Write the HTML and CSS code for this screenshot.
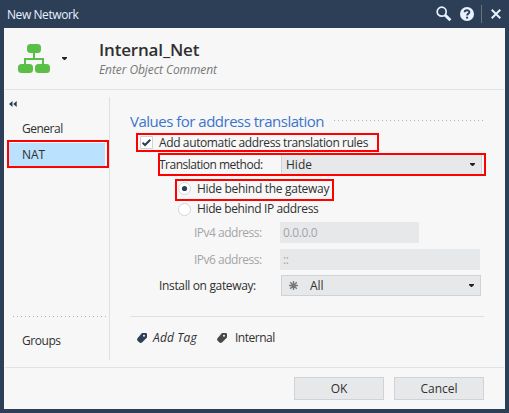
FILE: index.html
```html
<!DOCTYPE html>
<html lang="en">
<head>
<meta charset="utf-8">
<title>New Network</title>
<link rel="stylesheet" href="styles.css">
</head>
<body>
<div class="window">
  <header class="titlebar">
    <span class="title">New Network</span>
    <svg class="ic-search" width="16" height="16" viewBox="0 0 16 16"><circle cx="5.7" cy="5.7" r="4.5" fill="none" stroke="#e8f1ff" stroke-width="1.7"/><path d="M9 9L14.4 14.3" stroke="#e8f1ff" stroke-width="3"/></svg>
    <svg class="ic-help" width="14" height="14" viewBox="0 0 14 14"><circle cx="7" cy="7" r="7" fill="#e8f1ff"/><path d="M4.6 5.2C4.7 2.6 9.4 2.6 9.4 5.1C9.4 6.7 7.1 6.6 7.1 8.5" fill="none" stroke="#2d3f57" stroke-width="1.9"/><path d="M6.1 9.7h2v1.9h-2z" fill="#2d3f57"/></svg>
    <span class="sep"></span>
    <svg class="ic-close" width="10" height="10" viewBox="0 0 10 10"><path d="M.7.7L9.3 9.3M9.3.7L.7 9.3" stroke="#e8f1ff" stroke-width="2"/></svg>
  </header>
  <div class="panel">
    <section class="object">
      <svg class="ic-net" width="32" height="29" viewBox="0 0 32 29" fill="#5abf46"><rect x="9" y="0" width="14" height="9" rx="3.5"/><path d="M15 8h2v6h9v6h-2v-4H8v4H6v-6h9z"/><rect x="0" y="20" width="15" height="9" rx="3.5"/><rect x="17" y="20" width="15" height="9" rx="3.5"/></svg>
      <svg class="arrow" width="5" height="3" viewBox="0 0 5 3"><path d="M0 0h5v1L3 3H2L0 1z" fill="#222"/></svg>
      <div class="names">
        <h1>Internal_Net</h1>
        <p>Enter Object Comment</p>
      </div>
    </section>
    <div class="main">
      <nav class="side">
        <svg class="collapse" width="8" height="6" viewBox="0 0 8 6"><path d="M3.5 0v6L0 3zM7.7 0v6L4.2 3z" fill="#2d3f57"/></svg>
        <a class="item general">General</a>
        <a class="item nat mark">NAT</a>
        <span class="dots"></span>
        <a class="item groups">Groups</a>
      </nav>
      <div class="content">
        <div class="heading"><h2>Values for address translation</h2><span class="dots"></span></div>
        <div class="row check mark">
          <svg width="13" height="13" viewBox="0 0 13 13"><path d="M.5.5h12v12H.5z" fill="#fff" stroke="#cfd2d6"/><path d="M2.6 6.7L5 9L10.3 3.7" fill="none" stroke="#2d3f57" stroke-width="2"/></svg>
          <span class="t-check">Add automatic address translation rules</span>
        </div>
        <div class="row method mark">
          <span class="t-method">Translation method:</span>
          <div class="select"><span class="t-hide">Hide</span><svg class="arrow" width="5" height="3" viewBox="0 0 5 3"><path d="M0 0h5v1L3 3H2L0 1z" fill="#222"/></svg></div>
        </div>
        <div class="row radio first mark">
          <svg width="13" height="13" viewBox="0 0 13 13"><circle cx="6.5" cy="6.5" r="6" fill="#fff" stroke="#d3d6da"/><circle cx="6.5" cy="6.5" r="2.6" fill="#2d3f57"/></svg>
          <span class="t-gw">Hide behind the gateway</span>
        </div>
        <div class="row radio second">
          <svg width="13" height="13" viewBox="0 0 13 13"><circle cx="6.5" cy="6.5" r="6" fill="#fff" stroke="#d3d6da"/></svg>
          <span class="t-ip">Hide behind IP address</span>
        </div>
        <div class="row field"><label>IPv4 address:</label><div class="input short">0.0.0.0</div></div>
        <div class="row field"><label>IPv6 address:</label><div class="input">::</div></div>
        <div class="row install">
          <span class="t-install">Install on gateway:</span>
          <div class="select">
            <svg class="star" width="9" height="9" viewBox="0 0 9 9"><path d="M4.5 0v9M0 4.5h9M1.2 1.2L7.8 7.8M7.8 1.2L1.2 7.8" stroke="#777" stroke-width="1.4"/></svg>
            <span class="t-all">All</span>
            <svg class="arrow" width="5" height="3" viewBox="0 0 5 3"><path d="M0 0h5v1L3 3H2L0 1z" fill="#222"/></svg>
          </div>
        </div>
        <div class="tags">
          <svg width="10" height="10" viewBox="0 0 10 10"><path d="M5 0h4.3L10 .7V4.500L5 9.500Q3.500 10.500 2.200 9.300L.6 7.700Q-.4 6.400.7 5z" fill="#2d3f57"/><circle cx="7" cy="2.800" r="1" fill="#f7f7f7"/></svg>
          <span class="t-add">Add Tag</span>
          <svg class="gray" width="10" height="10" viewBox="0 0 10 10"><path d="M5 0h4.300L10 .7V4.500L5 9.500Q3.500 10.500 2.200 9.300L.6 7.700Q-.4 6.400.7 5z" fill="#484848"/><circle cx="7" cy="2.800" r="1" fill="#f7f7f7"/></svg>
          <span class="t-int">Internal</span>
        </div>
      </div>
    </div>
    <footer class="actions"><button class="ok">OK</button><button>Cancel</button></footer>
  </div>
</div>
</body>
</html>
```
FILE: styles.css
```css
* { box-sizing: border-box; margin: 0; padding: 0; }
body { font: 12px/16px "Open Sans", "Noto Sans", sans-serif; color: #303030; overflow: hidden; }
svg { flex: none; display: block; }
span, a, label, h1, h2, p { white-space: nowrap; }
.window { width: 509px; height: 413px; background: #2d3f57; padding: 0 4px 4px 4px; display: flex; flex-direction: column; }
.titlebar { height: 28px; display: flex; align-items: center; padding: 0 4px 0 3px; color: #e8f1ff; }
.title { flex: 1; letter-spacing: -.42px; position: relative; top: 1px; }
.ic-help { margin-left: 8px; }
.sep { width: 1px; height: 18px; margin: 0 9px 0 7px; background: #69727f; }
.panel { height: 381px; background: #f7f7f7; padding: 0 1px; display: flex; flex-direction: column; }
.object { height: 62px; border-bottom: 1px solid #e1e2e5; display: flex; align-items: flex-start; padding-left: 13px; }
.ic-net { margin-top: 16px; }
.object .arrow { margin: 29px 0 0 12px; }
.names { margin: 10px 0 0 32px; }
h1 { font-size: 17px; line-height: 24px; font-weight: 600; letter-spacing: -.17px; }
.names p { font-style: italic; color: #777; line-height: 16px; letter-spacing: -.08px; }
.main { height: 277px; display: flex; padding: 7px 0; }
.side { width: 105px; border-right: 1px solid #dfe0e3; display: flex; flex-direction: column; }
.collapse { margin: 4px 0 0 4px; }
.item { padding-left: 17px; }
.general { margin-top: 10px; height: 20px; line-height: 24px; letter-spacing: -.5px; }
.mark { border: 2px solid #f00; }
.nat { margin: 3px 0 0 2px; width: 102px; height: 28px; padding: 0 0 0 13px; line-height: 25px; background: linear-gradient(#bae1fe, #bae1fe) 0 1px / 96px 24px no-repeat; }
.side .dots { margin: 148px 0 0 8px; width: 95px; }
.dots { height: 1px; background: repeating-linear-gradient(90deg, #b0b4c0 0 1px, transparent 1px 4px); }
.groups { margin-top: 16px; letter-spacing: -.45px; }
.content { margin-left: 20px; width: 356px; }
.heading { height: 36px; display: flex; align-items: center; padding-top: 11px; }
h2 { font-size: 15px; font-weight: 400; color: #3c74ca; width: 204px; line-height: 24px; letter-spacing: -.5px; }
.heading .dots { width: 150px; }
.row { display: flex; align-items: center; }
.check { width: 243px; height: 19px; margin-left: 6px; padding-left: 2px; gap: 6px; }
.t-check { letter-spacing: -.38px; }
.method { width: 328px; height: 23px; margin: 1px 0 0 28px; }
.method > span { width: 121px; margin-left: -1px; margin-right: 1px; padding-top: 1px; letter-spacing: -.5px; }
.select { height: 21px; background: #e7e8ea; border: 1px solid #cfd2d6; display: flex; align-items: center; }
.method .select { width: 201px; height: 19px; border-width: 0 1px; padding: 0 6px 0 4px; justify-content: space-between; }
.t-hide { padding-top: 1px; }
.radio { gap: 6px; }
.first { width: 159px; height: 22px; margin: 3px 0 0 45px; padding: 0 0 3px 1px; }
.t-gw { letter-spacing: -.3px; }
.t-ip { letter-spacing: -.37px; }
.second { height: 16px; margin: 0 0 5px 48px; }
.field { height: 21px; margin: 0 0 6px 64px; color: #a3a5a8; }
.field label { width: 86px; letter-spacing: -.5px; }
.input { width: 200px; height: 21px; line-height: 21px; padding-left: 3px; background: #e7e8ea; letter-spacing: -.4px; }
.input.short { width: 139px; }
.install { margin: -1px 0 0 29px; }
.install > span { width: 122px; letter-spacing: -.35px; }
.install .select { width: 200px; padding: 0 6px 0 7px; }
.t-all { margin-left: 12px; flex: 1; }
.tags { width: 354px; margin-top: 20px; padding: 13px 0 0 7px; border-top: 1px solid #dce0e7; display: flex; align-items: center; }
.t-add { margin-left: 6px; width: 44px; font-style: italic; letter-spacing: .15px; }
.gray { margin-left: 20px; }
.t-int { margin-left: 8px; letter-spacing: -.5px; }
.actions { border-top: 1px solid #e1e2e5; height: 42px; display: flex; justify-content: flex-end; gap: 10px; padding: 9px 20px 0; }
button { width: 90px; height: 23px; font: inherit; color: inherit; background: #e7e8ea; border: 1px solid #cfd2d6; }
```
